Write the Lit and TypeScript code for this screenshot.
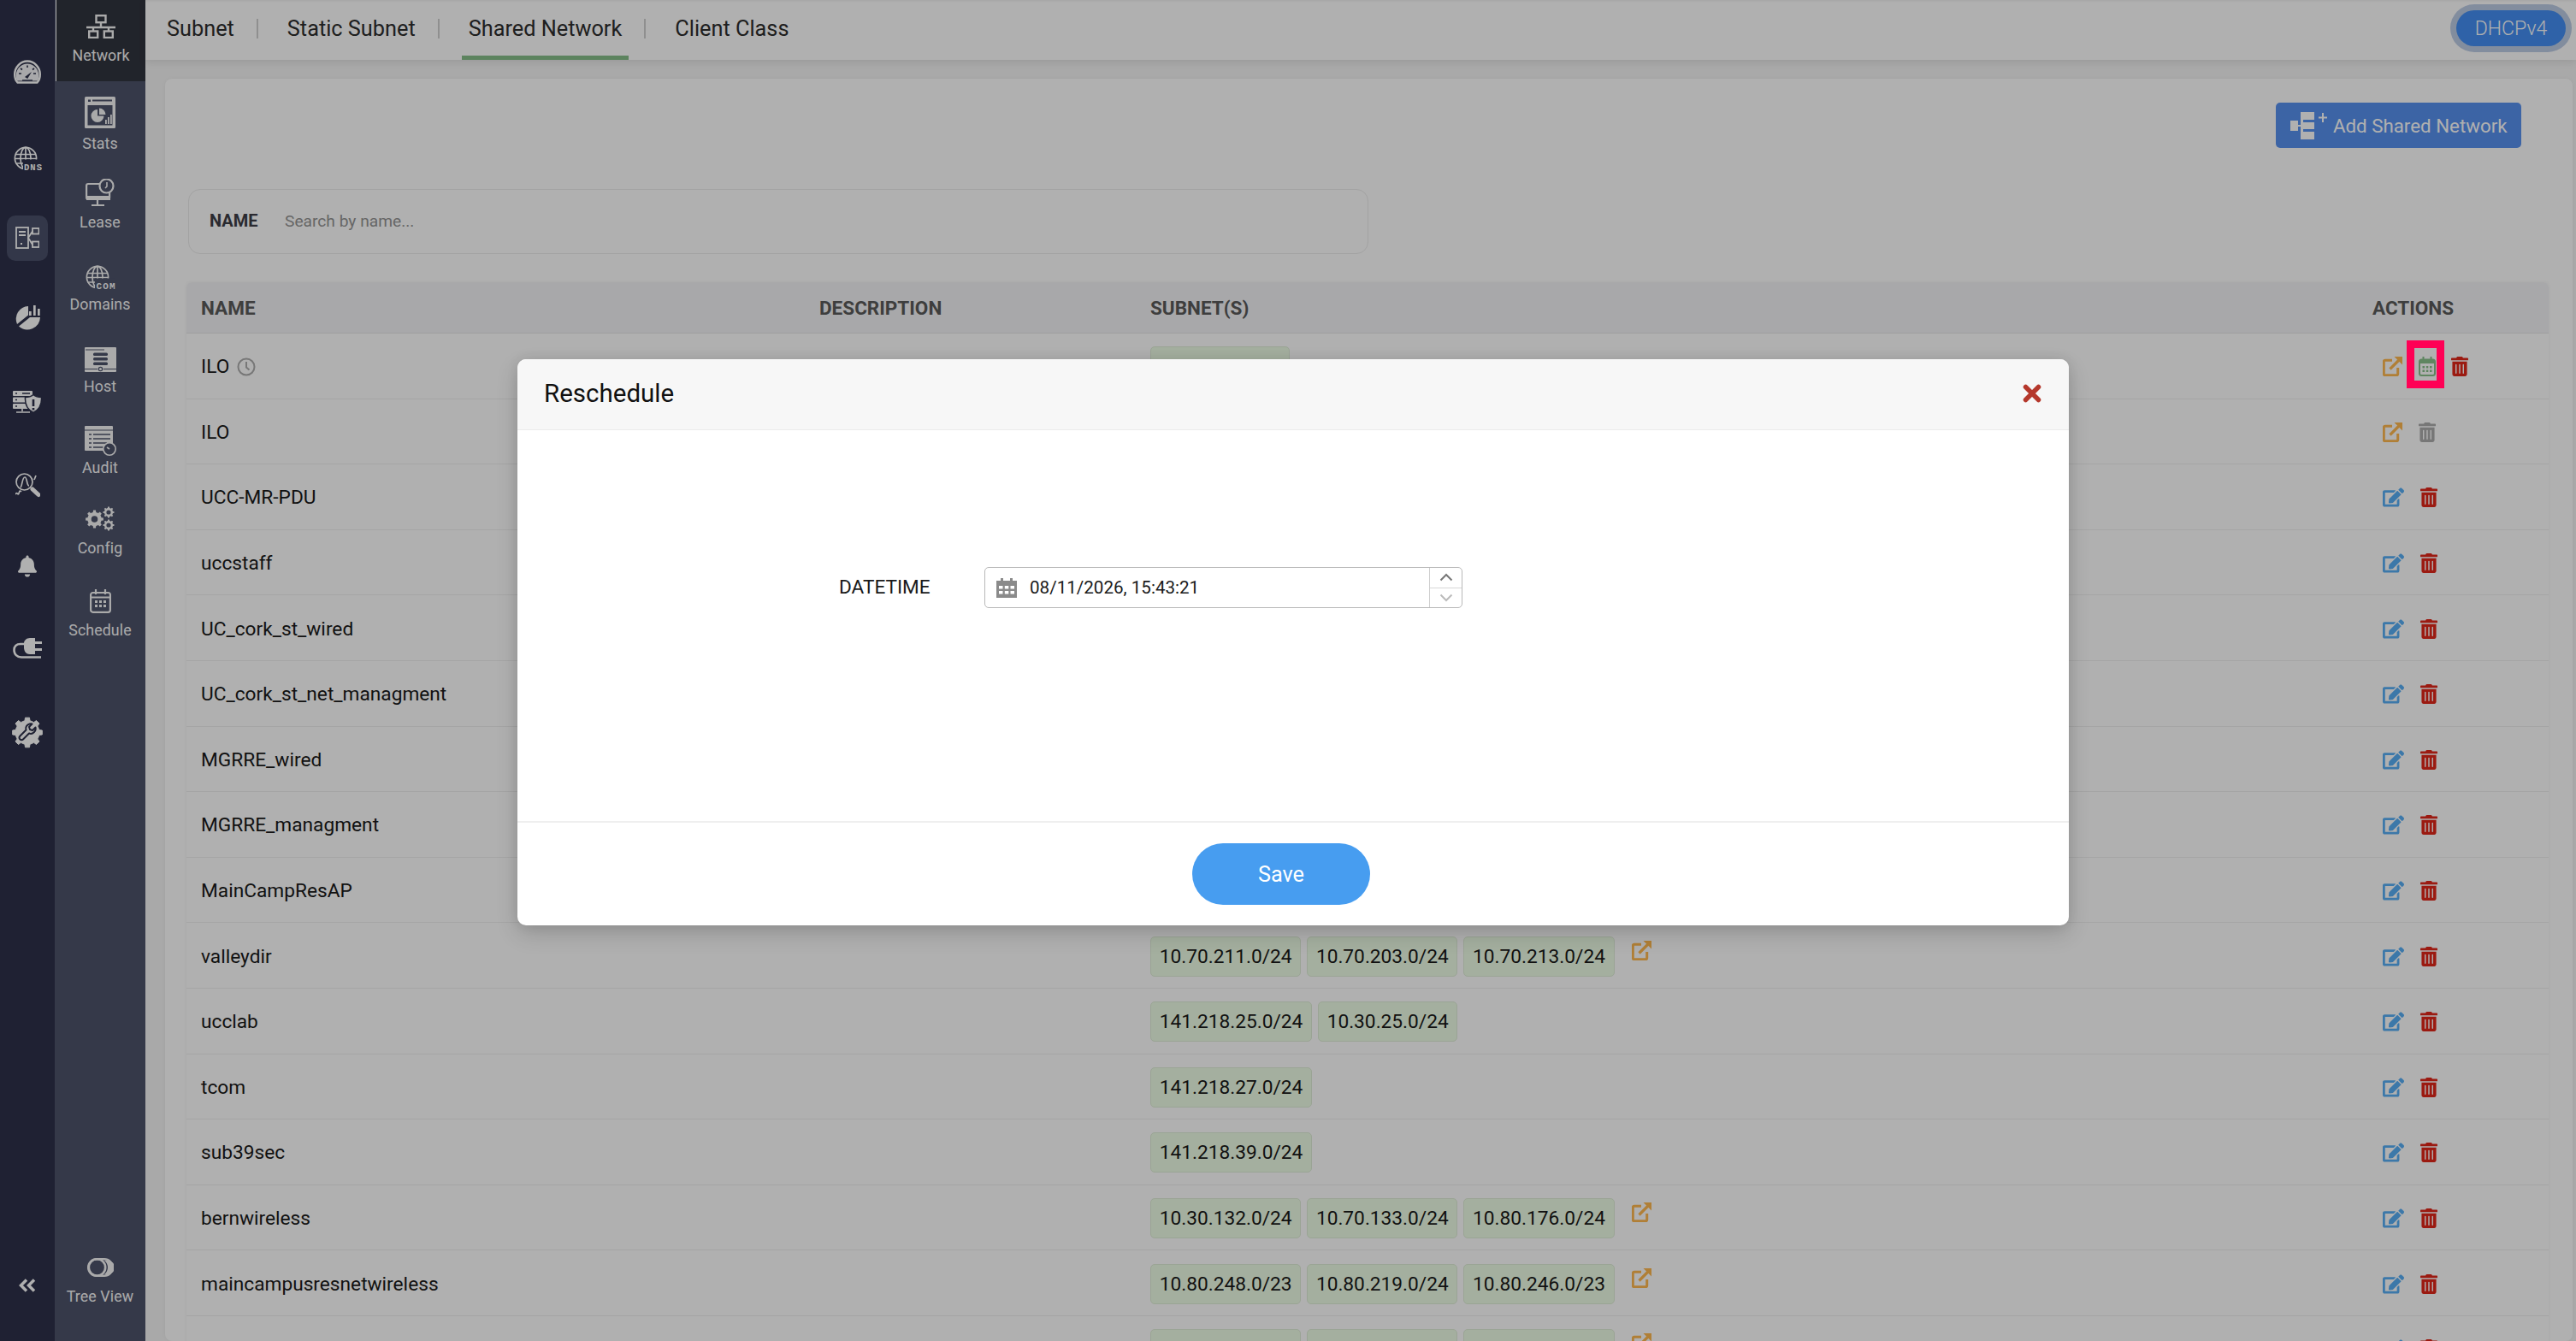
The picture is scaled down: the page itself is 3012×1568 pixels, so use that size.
import { LitElement, html, css, svg } from "lit";
import { customElement } from "lit/decorators.js";

const gear = (cx: number, cy: number, r: number, teeth: number, hole: number, inner = 0.78) => {
  let d = "";
  const ro = r, ri = r * inner;
  const step = (Math.PI * 2) / teeth;
  for (let i = 0; i < teeth; i++) {
    const a = i * step;
    const pts = [
      [ri, a - step * 0.5],
      [ri, a - step * 0.28],
      [ro, a - step * 0.18],
      [ro, a + step * 0.18],
      [ri, a + step * 0.28],
    ];
    for (const [rr, t] of pts) {
      d += (d ? "L" : "M") + (cx + rr * Math.cos(t)).toFixed(2) + " " + (cy + rr * Math.sin(t)).toFixed(2);
    }
  }
  d += "Z";
  if (hole > 0) {
    d += `M${cx - hole} ${cy}a${hole} ${hole} 0 1 0 ${hole * 2} 0a${hole} ${hole} 0 1 0 ${-hole * 2} 0Z`;
  }
  return d;
};

const BG = "#4d536b";
const RAIL = "#2d314a";
const EDIT = "M402.6 83.2l90.2 90.2c3.8 3.8 3.8 10 0 13.8L274.4 405.6l-92.8 10.3c-12.4 1.4-22.9-9.1-21.5-21.5l10.3-92.8L388.8 83.2c3.8-3.8 10-3.8 13.8 0zm162-22.9l-48.8-48.8c-15.2-15.2-39.9-15.2-55.2 0l-35.4 35.4c-3.8 3.8-3.8 10 0 13.8l90.2 90.2c3.8 3.8 10 3.8 13.8 0l35.4-35.4c15.2-15.3 15.2-40 0-55.2zM384 346.2V448H64V128h229.8c3.2 0 6.2-1.3 8.5-3.5l40-40c7.6-7.6 2.2-20.5-8.5-20.5H48C21.5 64 0 85.5 0 112v352c0 26.5 21.5 48 48 48h352c26.5 0 48-21.5 48-48V306.2c0-10.7-12.9-16-20.5-8.5l-40 40c-2.2 2.3-3.5 5.3-3.5 8.5z";
const TRASH = "M32 464a48 48 0 0 0 48 48h288a48 48 0 0 0 48-48V128H32zm272-256a16 16 0 0 1 32 0v224a16 16 0 0 1-32 0zm-96 0a16 16 0 0 1 32 0v224a16 16 0 0 1-32 0zm-96 0a16 16 0 0 1 32 0v224a16 16 0 0 1-32 0zM432 32H312l-9.4-18.7A24 24 0 0 0 281.1 0H166.8a23.72 23.72 0 0 0-21.4 13.3L136 32H16A16 16 0 0 0 0 48v32a16 16 0 0 0 16 16h416a16 16 0 0 0 16-16V48a16 16 0 0 0-16-16z";
const BELL = "M224 512c35.32 0 63.97-28.65 63.97-64H160.03c0 35.35 28.65 64 63.97 64zm215.39-149.71c-19.32-20.76-55.47-51.99-55.47-154.29 0-77.7-54.48-139.9-127.94-155.16V32c0-17.67-14.32-32-31.98-32s-31.98 14.33-31.98 32v20.84C118.56 68.1 64.08 130.3 64.08 208c0 102.3-36.15 133.53-55.47 154.29-6 6.45-8.66 14.16-8.61 21.71.11 16.4 12.98 32 32.1 32h383.8c19.12 0 32-15.6 32.1-32 .05-7.55-2.61-15.27-8.61-21.71z";

const icon = (w: number, h: number, body: unknown) =>
  html`<svg class="ic" width=${w} height=${h} viewBox="0 0 ${w} ${h}">${body}</svg>`;

const globe = (bg: string) => svg`
  <g fill="none" stroke="currentColor" stroke-width="1.7">
    <circle cx="14" cy="14" r="12.6"/>
    <ellipse cx="14" cy="14" rx="6" ry="12.6"/>
    <path d="M14 1.4V26.6M2 9.5H26M1.4 14.5H27M2.5 20H26"/>
  </g>
  <rect x="11" y="15.5" width="26" height="14" fill=${bg}/>`;

const icons: Record<string, () => unknown> = {
  network: () => icon(34, 28, svg`
    <g fill="none" stroke="currentColor" stroke-width="2.4">
      <rect x="11.5" y="1.2" width="11" height="8"/>
      <rect x="3.2" y="19.5" width="10" height="7.5"/>
      <rect x="20.8" y="19.5" width="10" height="7.5"/>
      <path d="M17 9v6M0 15h34M8 15v5M26 15v5"/>
    </g>`),
  stats: () => icon(36, 37, svg`
    <rect width="36" height="37" rx="1.5" fill="currentColor"/>
    <rect x="4" y="3.5" width="3" height="2.5" fill=${BG}/><rect x="9" y="3.5" width="23" height="2" fill=${BG}/>
    <rect x="3.5" y="10" width="29" height="23.5" fill=${BG}/>
    <path d="M15 15a7.5 7.5 0 1 0 7.5 7.5H15Z" fill="currentColor"/>
    <path d="M17 13.5a7.5 7.5 0 0 1 7.5 7.5H17Z" fill="currentColor"/>
    <rect x="24" y="27" width="1.8" height="5" fill="currentColor"/><rect x="27" y="24" width="1.8" height="8" fill="currentColor"/><rect x="30" y="21" width="1.8" height="11" fill="currentColor"/>`),
  lease: () => icon(34, 32, svg`
    <g fill="none" stroke="currentColor" stroke-width="2.2">
      <rect x="1.1" y="6" width="27" height="18" rx="2"/>
      <path d="M14 25v5M7 31h15"/>
      <circle cx="24.5" cy="8.5" r="8" fill=${BG}/>
      <path d="M25 4v5l-2 2" stroke-width="1.6"/>
    </g><rect x="1" y="20" width="28" height="5" fill="currentColor"/>`),
  domains: () => icon(35, 28, svg`${globe(BG)}
    <text x="12.5" y="27.5" font-family="Liberation Mono" font-weight="700" font-size="11" fill="currentColor" textLength="22">COM</text>`),
  host: () => icon(37, 29, svg`
    <rect width="37" height="29" rx="1" fill="currentColor"/>
    <path d="M1 3h22" stroke=${BG} stroke-width="1"/>
    <rect x="10" y="6.5" width="17" height="3.5" rx="1.5" fill=${BG}/>
    <rect x="10" y="12" width="17" height="3.5" rx="1.5" fill=${BG}/>
    <rect x="10" y="17.5" width="17" height="3.5" rx="1.5" fill=${BG}/>
    <path d="M0 25.5h15M22 25.5h15" stroke=${BG} stroke-width="1.2"/><circle cx="18.5" cy="25.5" r="2.2" fill="none" stroke=${BG} stroke-width="1.2"/>`),
  audit: () => icon(37, 36, svg`
    <path d="M1 1h31a1 1 0 0 1 1 1v28H1a1 1 0 0 1-1-1V2a1 1 0 0 1 1-1Z" fill="currentColor"/>
    <path d="M0 6h33" stroke=${BG} stroke-width="1.2"/>
    <path d="M5 11h3M10 11h20M5 16h3M10 16h20M5 21h3M10 21h16M5 26h3M10 26h12" stroke=${BG} stroke-width="1.5"/>
    <circle cx="29" cy="28" r="7.2" fill=${BG} stroke="currentColor" stroke-width="1.6"/>
    <path d="M29 28l-3-2" stroke="currentColor" stroke-width="1.6"/>`),
  config: () => icon(34, 29, svg`
    <path fill="currentColor" fill-rule="evenodd" d=${gear(10.5, 15, 10.5, 8, 3.8)}/>
    <path fill="currentColor" fill-rule="evenodd" d=${gear(27, 7, 6.5, 8, 2.6)}/>
    <path fill="currentColor" fill-rule="evenodd" d=${gear(27, 22, 6.5, 8, 2.6)}/>`),
  schedule: () => icon(25, 28, svg`
    <g fill="none" stroke="currentColor" stroke-width="2.2">
      <rect x="1.1" y="4" width="22.8" height="22.8" rx="2.5"/>
      <path d="M7 0v6M18 0v6M1 9.5h23"/>
    </g>
    <g fill="currentColor">
      <rect x="6" y="13" width="3" height="3"/><rect x="11" y="13" width="3" height="3"/><rect x="16" y="13" width="3" height="3"/>
      <rect x="6" y="18" width="3" height="3"/><rect x="11" y="18" width="3" height="3"/><rect x="16" y="18" width="3" height="3"/>
    </g>`),
  tree: () => icon(31, 22, svg`
    <g fill="none" stroke="currentColor" stroke-width="2.6">
      <rect x="1.3" y="1.3" width="28.4" height="19.4" rx="9.7"/>
      <circle cx="11.5" cy="11" r="9.7"/>
    </g><path d="M20 3a10 10 0 0 1 0 16h4a8 8 0 0 0 0-16Z" fill="currentColor"/>`),
  speed: () => icon(32, 28, svg`
    <path fill="none" stroke="currentColor" stroke-width="2.4" d="M4.500 26.500h23c2.500-2.600 3.300-6 3.300-9.500C30.800 8.500 24 1.500 16 1.500S1.200 8.500 1.200 17c0 3.500.8 6.900 3.300 9.500Z"/>
    <path fill="currentColor" d="M4 24.500h24c1-2 1.500-4.500 1.300-7-.6-7.500-6.300-13-13.300-13S3.300 10 2.700 17.500c-.2 2.500.3 5 1.300 7Z" opacity=".95"/>
    <path d="M6 16h3M8 10l2 1.500M16 6.500V9M24 10l-2 1.500M26 16h-3M10 24h12" stroke=${RAIL} stroke-width="1.6"/>
    <path d="M13 20l8-6-4.800 8Z" fill=${RAIL}/>`),
  dns: () => icon(33, 28, svg`${globe(RAIL)}
    <text x="12" y="27.500" font-family="Liberation Mono" font-weight="700" font-size="10.500" fill="currentColor" textLength="21">DNS</text>`),
  sub: () => icon(28, 26, svg`
    <g fill="none" stroke="currentColor" stroke-width="1.800">
      <rect x="1" y="1" width="14" height="24"/>
      <rect x="20" y="2" width="7.500" height="6.500"/>
      <rect x="20" y="17.500" width="7.500" height="6.500"/>
      <path d="M15 13l5-7.500M15 13l5 8M4 6h8M4 10h8"/>
    </g><rect x="6" y="19" width="2" height="2" fill="currentColor"/>`),
  pie: () => icon(30, 30, svg`
    <path fill="currentColor" d="M16 1A15 15 0 0 0 3 22L16 11.500Z"/>
    <path fill="currentColor" d="M5 24.500 18 14H30A15 15 0 0 1 5 24.500Z"/>
    <rect x="17" y="7" width="2.700" height="5" fill="currentColor"/><rect x="22" y="0" width="2.700" height="12" fill="currentColor"/><rect x="27" y="4" width="2.700" height="8" fill="currentColor"/>`),
  shield: () => icon(34, 26, svg`
    <rect x="0" y="0" width="23" height="6" rx="1" fill="currentColor"/>
    <rect x="0" y="7.500" width="23" height="6" rx="1" fill="currentColor"/>
    <rect x="0" y="15" width="23" height="6" rx="1" fill="currentColor"/>
    <path d="M3 3h2M3 10.500h2M3 18h2M11 3h9" stroke=${RAIL} stroke-width="1.600"/>
    <path d="M11 21v3M4 25h16" stroke="currentColor" stroke-width="1.600"/>
    <path d="M24 4.500c2.500 2 6 3 9.500 3 .5 8-2.500 14.500-9.500 18-7-3.500-10-10-9.500-18 3.500 0 7-1 9.500-3Z" fill="currentColor" stroke=${RAIL} stroke-width="1.500"/>
    <path d="M24 10v8M24 20v2.500" stroke=${RAIL} stroke-width="2.600"/>`),
  search: () => icon(29, 29, svg`
    <g fill="none" stroke="currentColor" stroke-width="1.700">
      <circle cx="10.500" cy="10.500" r="9.500"/>
      <path d="M6 17c2-2 2-12 5-12s2 10 5 10M0 25c2-4 3 2 4-1s1-4 3-2"/>
      <path d="M24 3l-2 5"/>
    </g><path d="M20 19l7 6.500" stroke="currentColor" stroke-width="5" stroke-linecap="round"/>`),
  bell: () => html`<svg class="ic" width="22" height="26" viewBox="0 0 448 512"><path fill="currentColor" d=${BELL}/></svg>`,
  plug: () => icon(34, 24, svg`
    <path fill="none" stroke="currentColor" stroke-width="2.600" d="M14 7H9C4 7 1.500 10 1.500 14C1.500 19 5 22.500 10 22.500H33"/>
    <path fill="currentColor" d="M20 0H26V19H20C15 19 13 15 13 11V6C13 3 16 0 20 0Z"/>
    <rect x="26" y="4" width="8" height="3" fill="currentColor"/><rect x="26" y="12" width="8" height="3" fill="currentColor"/>`),
  gearw: () => icon(36, 37, svg`
    <path fill="currentColor" stroke="currentColor" stroke-width="1" stroke-linejoin="round" d=${gear(18, 18.500, 17.500, 8, 0, 0.8)}/>
    <path fill="none" stroke=${RAIL} stroke-width="2" stroke-linejoin="round" d="M9 26c-1-1.500-.5-2.500.5-3.500l7-7c-1-3 .5-6 4-7 1-.3 2-.3 3 0l-3.500 3.500 1 3 3 1 3.500-3.500c.5 2 0 4-1.500 5.500-2 2-4 2.300-6 1.500l-7 7c-1 1-2.500 1-3.500 0Z"/>`),
};

const extLink = () => html`<svg class="ext" width="23" height="23" viewBox="0 0 23 23">
  <path fill="none" stroke="currentColor" stroke-width="3" stroke-linejoin="round" d="M11 4.300H2.800a1.500 1.500 0 0 0-1.500 1.500v14.400a1.500 1.500 0 0 0 1.500 1.500h13.400a1.500 1.500 0 0 0 1.500-1.500V13"/>
  <path fill="none" stroke="currentColor" stroke-width="3.200" d="M8.500 14.500 20 3"/>
  <path fill="currentColor" d="M13.500 0H23v9.500Z"/></svg>`;
const editIcon = () => html`<svg class="edit" width="25" height="23" viewBox="0 0 576 512"><path fill="currentColor" d=${EDIT}/></svg>`;
const trashIcon = (cls: string) => html`<svg class=${cls} width="20" height="23" viewBox="0 0 448 512"><path fill="currentColor" d=${TRASH}/></svg>`;
const calIcon = () => html`<svg class="calg" width="20" height="23" viewBox="0 0 20 23">
  <g fill="none" stroke="currentColor" stroke-width="2">
    <rect x="1" y="3.500" width="18" height="18.500" rx="2.500"/>
  </g>
  <path fill="currentColor" d="M1 4h18v4H1ZM4.500 0h2v4h-2ZM13.500 0h2v4h-2Z"/>
  <g fill="currentColor"><rect x="4.500" y="11" width="2.500" height="2.500"/><rect x="8.800" y="11" width="2.500" height="2.500"/><rect x="13" y="11" width="2.500" height="2.500"/><rect x="4.500" y="15.500" width="2.500" height="2.500"/><rect x="8.800" y="15.500" width="2.500" height="2.500"/><rect x="13" y="15.500" width="2.500" height="2.500"/></g>
</svg>`;

interface Row { name: string; chips: string[]; more?: boolean; clock?: boolean; mode?: "sched" | "locked"; }
const rows: Row[] = [
  { name: "ILO", chips: ["10.80.24.0/24"], clock: true, mode: "sched" },
  { name: "ILO", chips: ["10.80.25.0/24"], mode: "locked" },
  { name: "UCC-MR-PDU", chips: ["10.80.26.0/24"] },
  { name: "uccstaff", chips: ["10.80.27.0/24"] },
  { name: "UC_cork_st_wired", chips: ["10.80.28.0/24"] },
  { name: "UC_cork_st_net_managment", chips: ["10.80.29.0/24"] },
  { name: "MGRRE_wired", chips: ["10.80.30.0/24"] },
  { name: "MGRRE_managment", chips: ["10.80.31.0/24"] },
  { name: "MainCampResAP", chips: ["10.80.32.0/24"] },
  { name: "valleydir", chips: ["10.70.211.0/24", "10.70.203.0/24", "10.70.213.0/24"], more: true },
  { name: "ucclab", chips: ["141.218.25.0/24", "10.30.25.0/24"] },
  { name: "tcom", chips: ["141.218.27.0/24"] },
  { name: "sub39sec", chips: ["141.218.39.0/24"] },
  { name: "bernwireless", chips: ["10.30.132.0/24", "10.70.133.0/24", "10.80.176.0/24"], more: true },
  { name: "maincampusresnetwireless", chips: ["10.80.248.0/23", "10.80.219.0/24", "10.80.246.0/23"], more: true },
  { name: "mainwireless", chips: ["10.80.250.0/23", "10.80.221.0/24", "10.80.244.0/23"], more: true },
];

const subNav = [
  { key: "stats", label: "Stats", h: 96, gap: 8 },
  { key: "lease", label: "Lease", h: 101, gap: 9 },
  { key: "domains", label: "Domains", h: 96, gap: 8 },
  { key: "host", label: "Host", h: 91, gap: 7 },
  { key: "audit", label: "Audit", h: 95, gap: 4 },
  { key: "config", label: "Config", h: 97, gap: 10 },
  { key: "schedule", label: "Schedule", h: 97, gap: 10 },
];
const railIcons = [
  { key: "speed", gap: 0 },
  { key: "dns", gap: 41 },
  { key: "sub", gap: 33, on: true },
  { key: "pie", gap: 34 },
  { key: "shield", gap: 38 },
  { key: "search", gap: 37 },
  { key: "bell", gap: 35 },
  { key: "plug", gap: 36 },
  { key: "gearw", gap: 38 },
];
const tabs = ["Subnet", "Static Subnet", "Shared Network", "Client Class"];

@customElement("app-root")
export class AppRoot extends LitElement {
  static styles = css`
    :host { display: block; height: 100vh; overflow: hidden; font-family: Roboto, "Liberation Sans", sans-serif; position: relative; }
    .app { display: flex; height: 1568px; background: #f5f5f5; overflow: hidden; }
    .ic { display: block; flex: none; }
    .rail { width: 64px; flex: none; background: #2d314a; color: #fff; display: flex; flex-direction: column; align-items: center; padding-top: 54px; box-sizing: border-box; position: relative; }
    .rail-slot { display: flex; align-items: center; justify-content: center; flex: none; height: 60px; width: 48px; }
    .rail-item { display: flex; align-items: center; justify-content: center; width: 48px; flex: none; }
    .rail-item.on { background: #4b506a; border-radius: 10px; height: 53px; }
    .collapse { position: absolute; left: 22px; top: 1495px; }
    .subnav { width: 106px; flex: none; background: #4d536b; color: #f7f7f7; display: flex; flex-direction: column; position: relative; }
    .sub-active { height: 95px; flex: none; background: #31353f; border-left: 1px solid #fff; margin-left: 1px; box-sizing: border-box; display: flex; flex-direction: column; align-items: center; padding-top: 17px; }
    .sub-active .lbl, .tree .lbl { margin-top: 10px; }
    .sub-item { display: flex; flex-direction: column; align-items: center; flex: none; box-sizing: border-box; padding-top: 18px; }
    .lbl { font-size: 17.8px; line-height: 20px; white-space: nowrap; letter-spacing: .1px; }
    .tree { margin-top: auto; display: flex; flex-direction: column; align-items: center; height: 97px; box-sizing: border-box; }
    .tree .lbl { margin-top: 13px; }
    .main { flex: 1; min-width: 0; display: flex; flex-direction: column; }
    .tabbar { height: 70px; flex: none; background: #fff; display: flex; align-items: stretch; box-shadow: 0 3px 9px rgba(0,0,0,.09), inset 0 3px 3px -2px rgba(0,0,0,.08); position: relative; padding-left: 17px; }
    .tab { display: flex; align-items: center; padding: 0 8px 3px; font-size: 25.3px; color: #2e2e2e; position: relative; }
    .tab.on::after { content: ""; position: absolute; left: 0; right: 0; bottom: 0; height: 5px; background: #86be89; }
    .tab-sep { width: 2px; height: 23px; background: #cfcfcf; margin: 22px 26px 0 18px; flex: none; }
    .pill { position: absolute; left: 2702px; top: 12px; width: 128px; height: 42px; border-radius: 21px; background: #448ff3; color: #fff; font-weight: 300; font-size: 23px; display: flex; align-items: center; justify-content: center; box-shadow: 0 0 0 7px rgba(66,110,180,.35); }
    .content { flex: 1; padding: 22px 4px 0 23px; min-height: 0; }
    .card { background: #fff; border-radius: 8px; height: 100%; box-sizing: border-box; padding: 28px 60px 0 27px; box-shadow: 0 0 4px rgba(0,0,0,.05); }
    .btn-row { display: flex; justify-content: flex-end; }
    .add { height: 53px; width: 287px; background: #5891f0; border-radius: 5px; color: #fff; font-size: 22.3px; display: flex; align-items: center; box-sizing: border-box; padding-left: 17px; gap: 6px; white-space: nowrap; }
    .search { margin-top: 48px; width: 1380px; height: 76px; box-sizing: border-box; border: 1px solid #ececec; border-radius: 14px; display: flex; align-items: center; padding-left: 24px; }
    .search b { font-size: 20px; font-weight: 700; color: #3e3e46; width: 88px; margin-top: -3px; }
    .search span { font-size: 19.2px; color: #949494; margin-top: -1px; }
    .table { margin: 33px -32px 0 -2px; box-shadow: 0 0 4px rgba(0,0,0,.06); border-radius: 6px 6px 0 0; }
    .thead, .tr { display: grid; grid-template-columns: 723px 387px 1429px 1fr; padding-left: 17px; align-items: center; box-sizing: border-box; }
    .thead { height: 60px; background: #f4f4f6; border-bottom: 1px solid #e6e6e6; font-weight: 700; font-size: 22.5px; color: #5a5a5a; border-radius: 6px 6px 0 0; }
    .tr { height: 76.6px; padding-top: 2px; border-bottom: 1px solid #efefef; font-size: 22.7px; color: #191919; }
    .name { display: flex; align-items: center; gap: 9px; }
    .clock { color: #adadad; }
    .chips { display: flex; gap: 7px; align-items: flex-start; }
    .chip { background: #eefee6; border: 1px solid #e0eed8; border-radius: 5px; height: 47px; box-sizing: border-box; padding: 0 9.7px; display: flex; align-items: center; white-space: nowrap; }
    .ext { color: #ffb84f; flex: none; display: block; }
    .chips .ext { margin: 5px 0 0 13px; }
    .actions { display: flex; align-items: center; padding-left: 12px; }
    .actions .ext { margin-right: 19px; }
    .edit { color: #58aef5; flex: none; margin-right: 19px; display: block; }
    .calg { color: #88c18b; flex: none; margin-right: 18px; display: block; }
    .del { color: #e1271a; flex: none; display: block; }
    .off { color: #adadad; flex: none; display: block; }
    .overlay { position: absolute; inset: 0; background: rgba(0,0,0,.31); padding: 420px 0 0 605px; box-sizing: border-box; }
    .mark { position: absolute; left: 2814px; top: 398px; width: 44px; height: 56px; box-sizing: border-box; border: 9px solid #ff0055; }
    .modal { width: 1814px; height: 662px; background: #fff; border-radius: 10px; display: flex; flex-direction: column; overflow: hidden; box-shadow: 0 10px 26px rgba(0,0,0,.16), 0 0 14px rgba(0,0,0,.08); }
    .mhead { height: 83px; flex: none; background: #f7f7f7; border-bottom: 1px solid #ebebeb; box-sizing: border-box; display: flex; align-items: center; justify-content: space-between; padding: 0 32px 2px 31px; font-size: 29.5px; color: #111; }
    .x { display: block; margin-top: 0; }
    .mbody { height: 457px; flex: none; box-sizing: border-box; display: flex; align-items: flex-start; padding: 160px 0 0 376px; }
    .mbody label { width: 170px; font-size: 22.6px; color: #1a1a1a; line-height: 48px; }
    .dt { width: 559px; height: 48px; box-sizing: border-box; border: 1px solid #b8b8b8; border-radius: 5px; display: flex; align-items: center; padding-left: 13px; font-size: 20.6px; color: #1a1a1a; }
    .dt svg { flex: none; margin-right: 15px; }
    .dt span { flex: 1; }
    .spin { width: 37px; height: 100%; border-left: 1px solid #cfcfcf; display: flex; flex-direction: column; flex: none; }
    .spin div { flex: 1; display: flex; align-items: center; justify-content: center; }
    .spin div + div { border-top: 1px solid #d8d8d8; }
    .spin svg { margin: 0; }
    .mfoot { flex: 1; border-top: 2px solid #efefef; box-sizing: border-box; padding: 24px 0 0 789px; }
    .save { width: 208px; height: 72px; border-radius: 36px; background: #479df0; color: #fff; font-size: 25.3px; display: flex; align-items: center; justify-content: center; }
  `;

  render() {
    return html`
      <div class="app">
        <aside class="rail">
          ${railIcons.map(
            (r) => html`<div class="rail-slot" style="margin-top:${r.gap}px">
              <div class="rail-item ${r.on ? "on" : ""}">${icons[r.key]()}</div>
            </div>`
          )}
          <svg class="collapse ic" width="20" height="16" viewBox="0 0 20 16"><path fill="none" stroke="currentColor" stroke-width="3.500" d="M9 1.500 2.500 8 9 14.500M18 1.500 11.500 8 18 14.500"/></svg>
        </aside>
        <nav class="subnav">
          <div class="sub-active">${icons.network()}<div class="lbl">Network</div></div>
          ${subNav.map(
            (s) => html`<div class="sub-item" style="height:${s.h}px">${icons[s.key]()}<div class="lbl" style="margin-top:${s.gap}px">${s.label}</div></div>`
          )}
          <div class="tree">${icons.tree()}<div class="lbl">Tree View</div></div>
        </nav>
        <main class="main">
          <header class="tabbar">
            ${tabs.map(
              (t, i) => html`<div class="tab ${i === 2 ? "on" : ""}">${t}</div>${i < 3 ? html`<div class="tab-sep"></div>` : ""}`
            )}
            <div class="pill">DHCPv4</div>
          </header>
          <section class="content">
            <div class="card">
              <div class="btn-row">
                <div class="add">
                  <svg class="ic" width="44" height="32" viewBox="0 0 44 32">
                    <g fill="currentColor"><rect x="0" y="10" width="9" height="12"/><rect x="12" y="0" width="16" height="9"/><rect x="12" y="12" width="16" height="8"/><rect x="12" y="23" width="16" height="9"/><rect x="9" y="15" width="6" height="2"/><rect x="12" y="4" width="3" height="24"/></g>
                    <path d="M38 1v11M33 6.500h10" stroke="currentColor" stroke-width="2"/>
                  </svg>
                  Add Shared Network
                </div>
              </div>
              <div class="search"><b>NAME</b><span>Search by name...</span></div>
              <div class="table">
                <div class="thead"><div>NAME</div><div>DESCRIPTION</div><div>SUBNET(S)</div><div>ACTIONS</div></div>
                ${rows.map((r) => this.renderRow(r))}
              </div>
            </div>
          </section>
        </main>
      </div>
      <div class="overlay">
        <div class="modal">
          <div class="mhead">
            <span>Reschedule</span>
            <svg class="x" width="22" height="22" viewBox="0 0 22 22"><path d="M3.500 3.500l15 15M18.500 3.500l-15 15" stroke="#b5382c" stroke-width="5.500" stroke-linecap="round"/></svg>
          </div>
          <div class="mbody">
            <label>DATETIME</label>
            <div class="dt">
              <svg width="24" height="23" viewBox="0 0 24 23">
                <path fill="#8a8a8a" d="M0 3h24v20H0Z"/>
                <path fill="#8a8a8a" d="M5 0h3v4H5ZM16 0h3v4h-3Z"/>
                <g fill="#fff"><rect x="3" y="9" width="4.500" height="3.500"/><rect x="9.800" y="9" width="4.500" height="3.500"/><rect x="16.500" y="9" width="4.500" height="3.500"/><rect x="3" y="15" width="4.500" height="3.500"/><rect x="9.800" y="15" width="4.500" height="3.500"/><rect x="16.500" y="15" width="4.500" height="3.500"/></g>
              </svg>
              <span>08/11/2026, 15:43:21</span>
              <div class="spin">
                <div><svg width="16" height="10" viewBox="0 0 16 10"><path d="M1.500 8.500 8 2l6.500 6.500" fill="none" stroke="#777" stroke-width="2"/></svg></div>
                <div><svg width="16" height="10" viewBox="0 0 16 10"><path d="M1.500 1.500 8 8l6.500-6.500" fill="none" stroke="#bbb" stroke-width="2"/></svg></div>
              </div>
            </div>
          </div>
          <div class="mfoot"><div class="save">Save</div></div>
        </div>
        <div class="mark"></div>
      </div>
    `;
  }

  renderRow(r: Row) {
    return html`<div class="tr">
      <div class="name">${r.name}${r.clock
        ? html`<svg class="clock" width="22" height="22" viewBox="0 0 22 22"><circle cx="11" cy="11" r="9.500" fill="none" stroke="currentColor" stroke-width="2"/><path d="M11 5v6.500l3.500 3" fill="none" stroke="currentColor" stroke-width="2"/></svg>`
        : ""}</div>
      <div></div>
      <div class="chips">${r.chips.map((c) => html`<div class="chip">${c}</div>`)}${r.more ? extLink() : ""}</div>
      <div class="actions">
        ${r.mode === "sched"
          ? html`${extLink()}${calIcon()}${trashIcon("del")}`
          : r.mode === "locked"
          ? html`${extLink()}${trashIcon("off")}`
          : html`${editIcon()}${trashIcon("del")}`}
      </div>
    </div>`;
  }
}
